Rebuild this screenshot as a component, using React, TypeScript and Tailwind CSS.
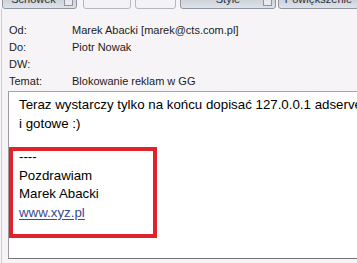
const ToolButton = ({ label, arrow, blank, className }: { label?: string; arrow?: boolean; blank?: boolean; className: string }) => (
    <div
        className={`relative h-[20px] shrink-0 rounded-[3px] border flex items-center justify-center text-[11px] text-[#2b2f36] ${
            blank ? 'border-[#b3b7bf] bg-[#f3f3f5]' : 'border-[#8e959f] bg-gradient-to-b from-[#b9bfc9] to-[#dfe3e9]'
        } ${className}`}
    >
        {label}
        {arrow && (
            <span className="absolute right-[3px] bottom-[2px] w-[9px] h-[7px] border border-[#8e959f] bg-[#e6e9ee]" />
        )}
    </div>
);

const HeaderRow = ({ label, value }: { label: string; value?: string }) => (
    <div className="flex h-[17px] items-center">
        <span className="w-[63px]">{label}</span>
        <span>{value}</span>
    </div>
);

export default function App() {
    return (
        <div className="w-[357px] h-[263px] overflow-hidden bg-[#f7f4f7] font-['Liberation_Sans',Arial,sans-serif] text-black">
            {/* toolbar, cut off at the top */}
            <div className="h-[9px] overflow-hidden flex items-end gap-[4px] pl-[2px] pr-[2px]">
                <ToolButton label="Schowek" arrow className="w-[75px] pr-[12px]" />
                <ToolButton blank className="w-[48px] ml-[2px]" />
                <ToolButton blank className="w-[41px]" />
                <ToolButton label="Style" arrow className="w-[96px]" />
                <ToolButton label="Powiększenie" className="w-[81px] -ml-[2px]" />
            </div>

            <div className="h-[254px] border-l border-[#cfcdd4] ml-[1px] pt-[13px] flex flex-col">
                {/* message header */}
                <div className="pl-[7px] text-[11px] text-[#1c1c1c]">
                    <HeaderRow label="Od:" value="Marek Abacki [marek@cts.com.pl]" />
                    <HeaderRow label="Do:" value="Piotr Nowak" />
                    <HeaderRow label="DW:" />
                    <HeaderRow label="Temat:" value="Blokowanie reklam w GG" />
                </div>

                {/* message body */}
                <div className="ml-[6px] mt-[1px] h-[168px] border-l border-t border-b border-l-[#9a9a9a] border-t-[#a5a5a5] border-b-[#767676] bg-white text-[13.3px] leading-[18.5px]">
                    <div className="pl-[10px] pt-[4px]">
                        <p className="whitespace-nowrap">Teraz wystarczy tylko na końcu dopisać 127.0.0.1 adserver.gadu-gadu.pl</p>
                        <p>i gotowe :)</p>
                    </div>
                    <div className="mt-[14px] w-[148px] h-[91px] border-4 border-[#e2222b] pl-[6px]">
                        <div className="-mt-[11px] pt-[8px]">
                            <p>----</p>
                            <p>Pozdrawiam</p>
                            <p>Marek Abacki</p>
                            <a href="#" className="text-[#3a4894] underline underline-offset-2">www.xyz.pl</a>
                        </div>
                    </div>
                </div>
            </div>
        </div>
    );
}
